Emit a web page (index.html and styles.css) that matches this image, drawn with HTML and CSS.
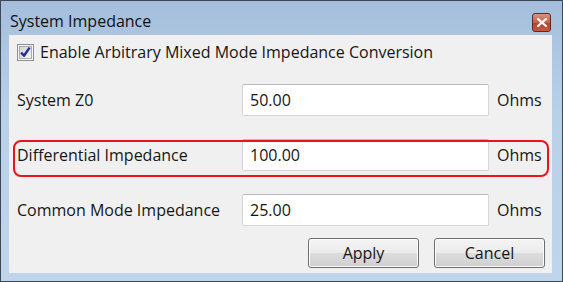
FILE: index.html
```html
<html>
<head>
<link rel="stylesheet" href="styles.css">
</head>
<body>
<div class="window">
  <div class="titlebar">
    <span class="title">System Impedance</span>
    <div class="closebtn">
      <svg width="10" height="9" viewBox="0 0 10 9">
        <path d="M1 1 L9 8 M9 1 L1 8" stroke="#fff" stroke-width="2.2" stroke-linecap="square"/>
      </svg>
    </div>
  </div>
  <div class="client">
    <div class="check-row">
      <span class="checkbox">
        <svg width="17" height="17" viewBox="0 0 17 17">
          <defs>
            <linearGradient id="cbg" x1="0" y1="0" x2="1" y2="1">
              <stop offset="0" stop-color="#cfd3d8"/>
              <stop offset="1" stop-color="#f4f5f6"/>
            </linearGradient>
          </defs>
          <rect x="0.5" y="0.5" width="16" height="16" fill="#f6f6f6" stroke="#8e8f8f"/>
          <rect x="2.5" y="2.5" width="12" height="12" fill="url(#cbg)" stroke="#a8acb2"/>
          <path d="M4.2 8.6 L7 11.8 L12.6 3.6" fill="none" stroke="#212f8a" stroke-width="2.4" stroke-linejoin="round"/>
        </svg>
      </span>
      <span>Enable Arbitrary Mixed Mode Impedance Conversion</span>
    </div>

    <div class="field-row">
      <span class="label">System Z0</span>
      <input class="field" type="text" value="50.00">
      <span class="unit">Ohms</span>
    </div>
    <div class="field-row highlight">
      <span class="label">Differential Impedance</span>
      <input class="field" type="text" value="100.00">
      <span class="unit">Ohms</span>
    </div>
    <div class="field-row">
      <span class="label">Common Mode Impedance</span>
      <input class="field" type="text" value="25.00">
      <span class="unit">Ohms</span>
    </div>

    <div class="buttons">
      <button class="btn">Apply</button>
      <button class="btn">Cancel</button>
    </div>
  </div>
</div>
</body>
</html>
```

FILE: styles.css
```css
body {
  margin: 0;
  font-family: "Open Sans", "Noto Sans", sans-serif;
  font-size: 16px;
  color: #161616;
}

.window {
  width: 563px;
  height: 282px;
  box-sizing: border-box;
  border: 1px solid #3c4854;
  background: linear-gradient(#a4bedb, #b9d0e9 40%, #bfd5ec);
  display: flex;
  flex-direction: column;
}

.titlebar {
  height: 34px;
  display: flex;
  align-items: center;
  justify-content: space-between;
  padding: 0 11px 0 9px;
}

.title {
  color: #111;
  margin-top: 6px;
}

.closebtn {
  width: 17px;
  height: 17px;
  margin-top: 9px;
  border: 1px solid #5b2a22;
  border-radius: 3px;
  background: linear-gradient(#d99484, #c4614b 50%, #b3442c 51%, #c55a42);
  display: flex;
  align-items: center;
  justify-content: center;
}

.client {
  flex: 1;
  margin: 0 10px 8px 8px;
  background: #f0f0f0;
  padding: 0 7px 5px 8px;
  display: flex;
  flex-direction: column;
}

.check-row {
  height: 34px;
  display: flex;
  align-items: center;
  gap: 6px;
}

.checkbox {
  display: flex;
}

.field-row {
  position: relative;
  display: grid;
  grid-template-columns: 225px 247px auto;
  align-items: center;
  height: 32px;
  margin-top: 15px;
}

.field-row + .field-row {
  margin-top: 23px;
}

.unit {
  padding-left: 8px;
}

.highlight::after {
  content: "";
  position: absolute;
  left: -4px;
  right: -4px;
  top: 1px;
  bottom: -6px;
  border: 2px solid #e8161c;
  border-radius: 8px;
}

.field {
  height: 32px;
  box-sizing: border-box;
  border: 1px solid #d3d6da;
  border-top-color: #b5b8bd;
  border-radius: 2px;
  background: #fff;
  font: inherit;
  color: #161616;
  padding: 0 7px;
  outline: none;
}

.buttons {
  margin-top: auto;
  display: flex;
  justify-content: flex-end;
  gap: 15px;
}

.btn {
  width: 111px;
  height: 30px;
  border: 1px solid #707070;
  border-radius: 3px;
  background: linear-gradient(#f4f4f4, #ebebeb 50%, #dddddd 51%, #cfcfcf);
  font: inherit;
  color: #161616;
  box-shadow: inset 0 0 0 1px #fbfbfb;
}
```
